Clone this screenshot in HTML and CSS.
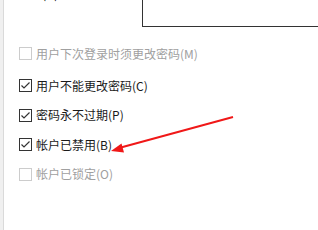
FILE: index.html
```html
<!DOCTYPE html>
<html lang="zh-CN">
<head>
    <meta charset="UTF-8">
    <title>属性</title>
    <link rel="stylesheet" href="styles.css">
</head>
<body>
    <div class="frame">
        <div class="edge"></div>
        <div class="content">
            <div class="field">
                <label class="field-label">描述(D):</label>
                <div class="textbox"></div>
            </div>

            <div class="options">
                <div class="option disabled first">
                    <span class="box"></span>
                    <span class="text">用户下次登录时须更改密码(M)</span>
                </div>
                <div class="option">
                    <span class="box">
                        <svg viewBox="0 0 11 11" width="11" height="11"><polyline points="1.5,5.5 4,8 9.5,2.5" /></svg>
                    </span>
                    <span class="text">用户不能更改密码(C)</span>
                </div>
                <div class="option">
                    <span class="box">
                        <svg viewBox="0 0 11 11" width="11" height="11"><polyline points="1.5,5.5 4,8 9.5,2.5" /></svg>
                    </span>
                    <span class="text">密码永不过期(P)</span>
                </div>
                <div class="option">
                    <span class="box">
                        <svg viewBox="0 0 11 11" width="11" height="11"><polyline points="1.5,5.5 4,8 9.5,2.5" /></svg>
                    </span>
                    <span class="text">帐户已禁用(B)</span>
                </div>
                <div class="option disabled">
                    <span class="box"></span>
                    <span class="text">帐户已锁定(O)</span>
                </div>
            </div>
        </div>
    </div>

    <!-- 标注箭头 -->
    <svg class="arrow" width="318" height="230" viewBox="0 0 318 230">
        <line x1="233" y1="117" x2="119" y2="148" />
        <polygon points="111,151 121.5,143.5 124,152.5" />
    </svg>
</body>
</html>
```

FILE: styles.css
```css
body {
    margin: 0;
    width: 318px;
    height: 230px;
    overflow: hidden;
    background-color: #ffffff;
    font-family: "Noto Sans CJK SC", "Microsoft YaHei", sans-serif;
    font-size: 12px;
    color: #000000;
    position: relative;
}

.frame {
    display: flex;
    height: 230px;
}

.edge {
    width: 3px;
    background-color: #f0f0f0;
    border-right: 1px solid #dadada;
}

.content {
    flex: 1;
    min-width: 0;
}

.field {
    display: flex;
    height: 27px;
}

.field-label {
    flex: 0 0 138px;
    padding-left: 14px;
    box-sizing: border-box;
    margin-top: -14px;
    line-height: 16px;
}

.textbox {
    flex: 1;
    height: 40px;
    margin-top: -13px;
    margin-right: -10px;
    border: 1px solid #333333;
    box-sizing: border-box;
}

.options {
    display: flex;
    flex-direction: column;
    gap: 16.4px;
    padding-left: 15px;
    margin-top: 20px;
}

.option {
    display: flex;
    align-items: center;
    height: 13px;
}

.option.first {
    margin-bottom: 3px;
}

.box {
    width: 13px;
    height: 13px;
    box-sizing: border-box;
    border: 1px solid #333333;
    background-color: #ffffff;
    display: flex;
    align-items: center;
    justify-content: center;
}

.box svg polyline {
    fill: none;
    stroke: #333333;
    stroke-width: 1.2;
}

.text {
    margin-left: 4px;
    line-height: 16px;
    white-space: nowrap;
    color: #1a1a1a;
}

.option.disabled .box {
    border-color: #cccccc;
}

.option.disabled .text {
    color: #a0a0a0;
}

.arrow {
    position: absolute;
    left: 0;
    top: 0;
}

.arrow line {
    stroke: #f01818;
    stroke-width: 2;
}

.arrow polygon {
    fill: #f01818;
}
```
